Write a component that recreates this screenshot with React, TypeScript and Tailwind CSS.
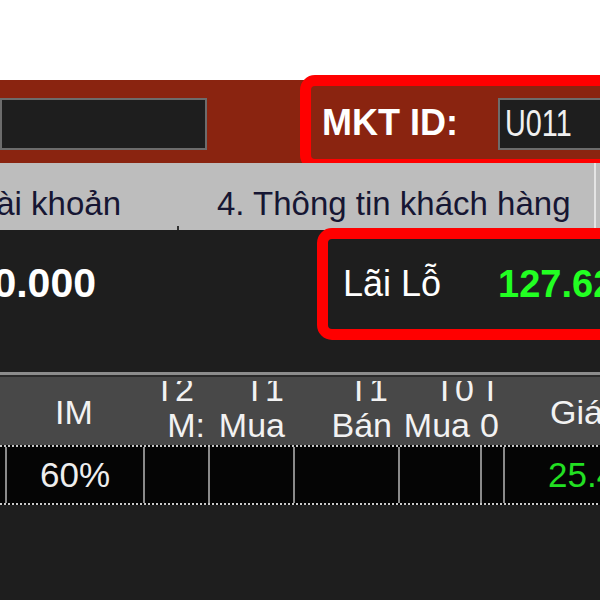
function HeadCell({
  w,
  top,
  bottom,
  topPr,
  bottomPr,
  alignStart,
}: {
  w: string;
  top: string;
  bottom: string;
  topPr: string;
  bottomPr: string;
  alignStart?: boolean;
}) {
  return (
    <div className={`flex ${w} shrink-0 flex-col overflow-hidden pt-[4px] ${alignStart ? "items-start" : "items-end"}`}>
      <div className={`h-[25px] overflow-hidden ${topPr}`}>
        <div className="-mt-[12px] leading-[40px]">{top}</div>
      </div>
      <div className={`mt-[2px] leading-[40px] ${bottomPr}`}>{bottom}</div>
    </div>
  );
}

export default function App() {
  const dots =
    "h-[2px] w-full bg-[#050505] bg-[repeating-linear-gradient(90deg,#c8c8c8_0px,#c8c8c8_2px,transparent_2px,transparent_4px)]";
  return (
    <div className="flex h-[600px] w-[600px] flex-col overflow-hidden bg-white font-['Liberation_Sans',Arial,sans-serif]">
      <div className="h-[80px] shrink-0 bg-white" />

      {/* brown top bar */}
      <div className="flex h-[83px] shrink-0 items-start bg-[#8a2410]">
        <div className="mt-[18px] h-[52px] w-[207px] shrink-0 border-2 border-[#6c6c6c] bg-[#1e1e1e]" />
        <div className="ml-[104px] mt-[6px] flex h-[73px] w-[330px] shrink-0 items-start rounded-[4px] outline-[11px] outline-solid outline-[#ff0000]">
          <div className="flex h-[73px] w-[187px] shrink-0 items-center pl-[11px] text-[36px] font-bold leading-[36px] text-white">
            MKT ID:
          </div>
          <div className="mt-[12px] flex h-[52px] flex-1 items-center border-2 border-[#6c6c6c] bg-[#1e1e1e] pl-[5px]">
            <span className="inline-block origin-left scale-x-[0.8] text-[36px] leading-[36px] text-[#f0f0f0]">U011</span>
          </div>
        </div>
      </div>

      {/* tab bar */}
      <div className="flex h-[67px] shrink-0 items-stretch bg-[#bdbdbd] text-[33px] leading-[38px] text-[#161633]">
        <div className="flex w-[121px] shrink-0 justify-end overflow-hidden whitespace-nowrap pt-[22px]">Tài khoản</div>
        <div className="ml-[56px] h-[4px] w-[2px] shrink-0 self-end bg-[#333333]" />
        <div className="ml-[38px] whitespace-nowrap pt-[22px]">4. Thông tin khách hàng</div>
        <div className="ml-auto mr-[4px] w-[2px] shrink-0 bg-[#e4e4e4]" />
      </div>

      {/* dark summary panel */}
      <div className="flex h-[142px] shrink-0 items-start bg-[#1e1e1e]">
        <div className="mt-[31px] flex w-[96px] shrink-0 justify-end overflow-hidden whitespace-nowrap text-[41px] font-bold leading-[44px] text-white">
          10.000
        </div>
        <div className="ml-[232px] mt-[9px] flex h-[90px] w-[300px] shrink-0 items-center rounded-[4px] outline-[11px] outline-solid outline-[#ff0000]">
          <span className="ml-[15px] whitespace-nowrap text-[36px] leading-[40px] text-white">Lãi Lỗ</span>
          <span className="ml-[57px] whitespace-nowrap text-[38px] font-bold leading-[40px] text-[#22ff22]">127.62</span>
        </div>
      </div>

      <div className="h-[3px] shrink-0 bg-[#8c8c8c]" />
      <div className="h-[2px] shrink-0 bg-[#2a2a2a]" />

      {/* grid header */}
      <div className="flex h-[68px] shrink-0 overflow-hidden bg-[#484848] text-[34px] leading-[40px] text-[#f2f2f2]">
        <div className="w-[5px] shrink-0" />
        <div className="w-[138px] shrink-0 pt-[15px] text-center">IM</div>
        <HeadCell w="w-[65px]" top="T2" bottom="M:" topPr="pr-[14px]" bottomPr="pr-[3px]" />
        <HeadCell w="w-[85px]" top="T1" bottom="Mua" topPr="pr-[9px]" bottomPr="pr-[8px]" />
        <HeadCell w="w-[105px]" top="T1" bottom="Bán" topPr="pr-[10px]" bottomPr="pr-[6px]" />
        <HeadCell w="w-[82px]" top="T0" bottom="Mua" topPr="pr-[6px]" bottomPr="pr-[10px]" />
        <HeadCell w="w-[23px]" top="T" bottom="0" topPr="pr-0" bottomPr="pr-0" alignStart />
        <div className="shrink-0 whitespace-nowrap pl-[47px] pt-[15px]">Giá</div>
      </div>

      <div className={`${dots} shrink-0`} />

      {/* data row */}
      <div className="flex h-[56px] shrink-0 bg-[#050505] text-[35px] leading-[40px]">
        <div className="w-[5px] shrink-0" />
        <div className="flex w-[138px] shrink-0 items-center justify-center border-l-2 border-[#8a8a8a] text-[#eeeeee]">60%</div>
        <div className="w-[65px] shrink-0 border-l-2 border-[#8a8a8a]" />
        <div className="w-[85px] shrink-0 border-l-2 border-[#8a8a8a]" />
        <div className="w-[105px] shrink-0 border-l-2 border-[#8a8a8a]" />
        <div className="w-[82px] shrink-0 border-l-2 border-[#8a8a8a]" />
        <div className="w-[23px] shrink-0 border-l-2 border-[#8a8a8a]" />
        <div className="flex flex-1 items-center whitespace-nowrap border-l-2 border-[#8a8a8a] pl-[43px] text-[#22e022]">25.45</div>
      </div>

      <div className={`${dots} shrink-0`} />
      <div className="flex-1 bg-[#1e1e1e]" />
    </div>
  );
}
